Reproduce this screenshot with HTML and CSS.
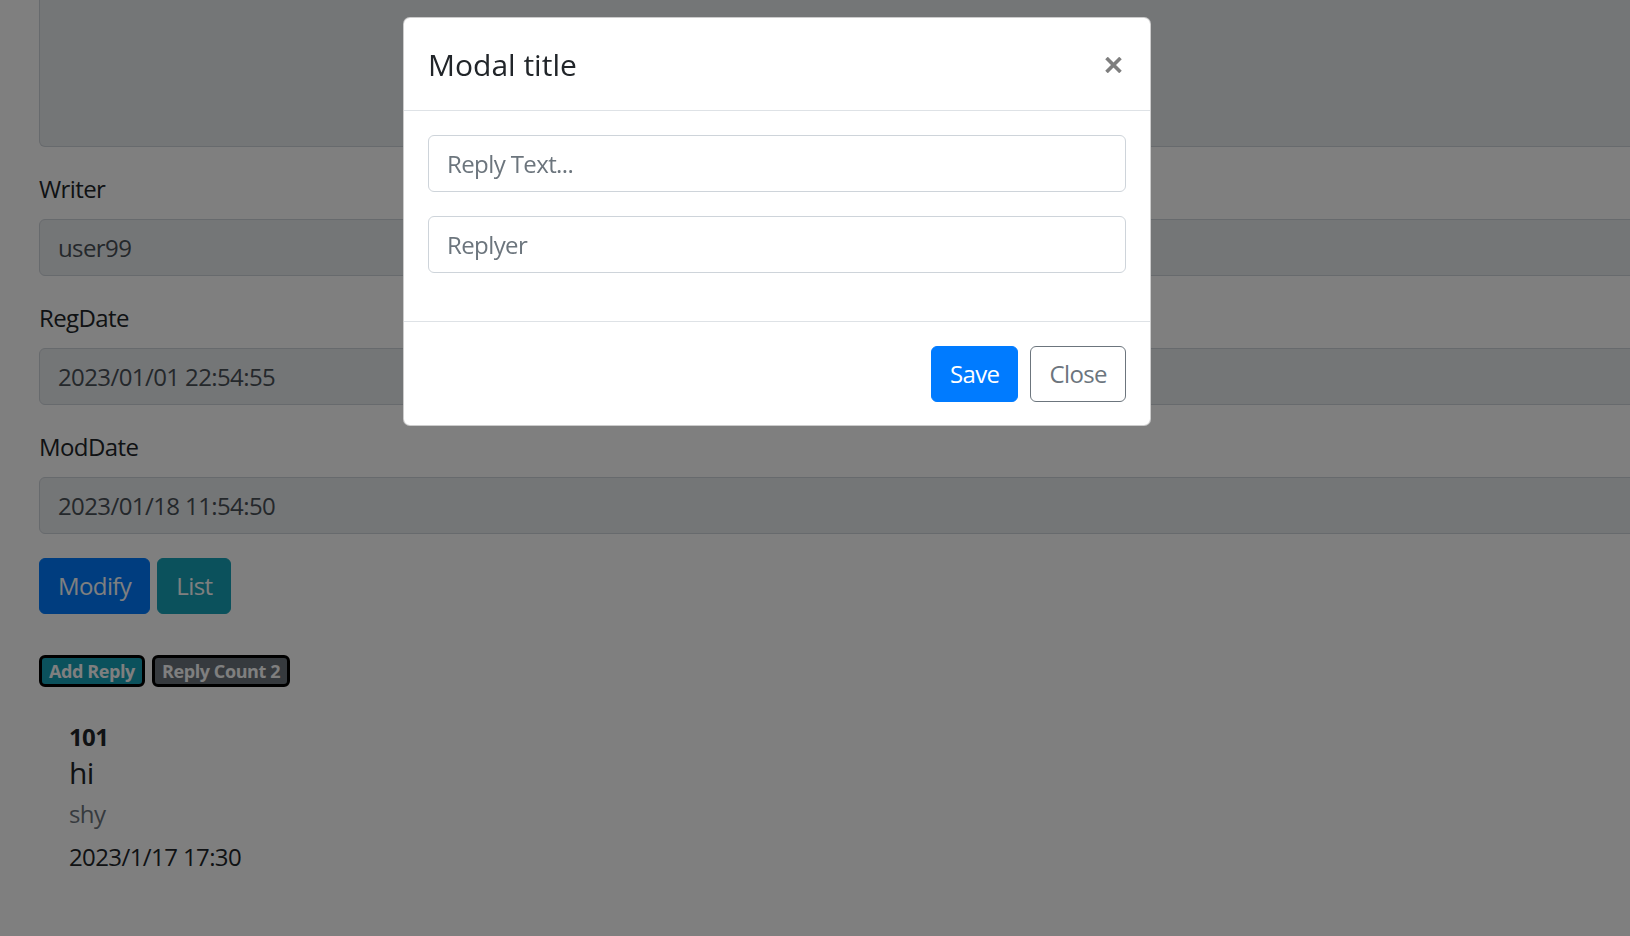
FILE: index.html
```html
<!DOCTYPE html>
<html lang="en">
<head>
<meta charset="utf-8">
<title>Board Read</title>
<link rel="stylesheet" href="styles.css">
</head>
<body>
<main class="page">
  <div class="form-group">
    <div class="textarea-tail"></div>
  </div>
  <div class="form-group">
    <label class="field-label">Writer</label>
    <input class="form-control" type="text" value="user99" readonly>
  </div>
  <div class="form-group">
    <label class="field-label">RegDate</label>
    <input class="form-control" type="text" value="2023/01/01 22:54:55" readonly>
  </div>
  <div class="form-group">
    <label class="field-label">ModDate</label>
    <input class="form-control" type="text" value="2023/01/18 11:54:50" readonly>
  </div>
  <div class="actions">
    <button class="btn btn-primary" type="button">Modify</button>
    <button class="btn btn-info" type="button">List</button>
  </div>
  <div class="badges">
    <button class="badge badge-info" type="button">Add Reply</button>
    <button class="badge badge-secondary" type="button">Reply Count 2</button>
  </div>
  <ul class="reply-list">
    <li class="reply">
      <div class="reply-no">101</div>
      <h5 class="reply-text">hi</h5>
      <div class="reply-writer">shy</div>
      <div class="reply-date">2023/1/17 17:30</div>
    </li>
  </ul>
</main>

<div class="modal-backdrop"></div>

<div class="modal" role="dialog">
  <div class="modal-content">
    <div class="modal-header">
      <h5 class="modal-title">Modal title</h5>
      <button class="close" type="button" aria-label="Close">
        <svg width="17" height="16" viewBox="0 0 17 16" aria-hidden="true">
          <path d="M1.5 1 L15.5 15 M15.5 1 L1.5 15" stroke="#000" stroke-width="3.6" fill="none"/>
        </svg>
      </button>
    </div>
    <div class="modal-body">
      <div class="form-group">
        <input class="form-control" type="text" placeholder="Reply Text...">
      </div>
      <div class="form-group">
        <input class="form-control" type="text" placeholder="Replyer">
      </div>
    </div>
    <div class="modal-footer">
      <button class="btn btn-primary" type="button">Save</button>
      <button class="btn btn-outline-secondary" type="button">Close</button>
    </div>
  </div>
</div>
</body>
</html>
```

FILE: styles.css
```css
html, body {
  margin: 0;
  padding: 0;
  overflow: hidden;
  height: 100%;
}

body {
  font-family: "Open Sans", "Noto Sans", sans-serif;
  font-size: 24px;
  line-height: 1.5;
  letter-spacing: -0.6px;
  color: #212529;
  background: #fff;
}

.page {
  padding-left: 39px;
  margin-right: -120px;
}

.form-group {
  margin-bottom: 24px;
}

.textarea-tail {
  height: 147px;
  box-sizing: border-box;
  background: #e9ecef;
  border: 1px solid #ced4da;
  border-top: none;
  border-radius: 0 0 6px 6px;
}

.field-label {
  display: block;
  margin-bottom: 12px;
  line-height: 36px;
}

.form-control {
  display: block;
  width: 100%;
  height: 57px;
  box-sizing: border-box;
  padding: 9px 18px;
  font: inherit;
  font-size: 24px;
  line-height: 36px;
  letter-spacing: -0.6px;
  color: #495057;
  background: #fff;
  border: 1px solid #ced4da;
  border-radius: 6px;
  outline: none;
}

.form-control[readonly] {
  background: #e9ecef;
}

.form-control::placeholder {
  color: #6c757d;
  opacity: 1;
}

.actions {
  display: flex;
  gap: 7px;
}

.btn {
  height: 56px;
  box-sizing: border-box;
  padding: 0 18px;
  font: inherit;
  font-size: 24px;
  line-height: 36px;
  letter-spacing: -0.6px;
  border: 1px solid transparent;
  border-radius: 6px;
  cursor: pointer;
}

.btn-primary {
  color: #fff;
  background: #007bff;
  border-color: #007bff;
}

.btn-info {
  color: #fff;
  background: #17a2b8;
  border-color: #17a2b8;
}

.btn-outline-secondary {
  color: #6c757d;
  background: #fff;
  border-color: #6c757d;
}

.badges {
  display: flex;
  gap: 7px;
  margin-top: 41px;
}

.badge {
  height: 32px;
  box-sizing: border-box;
  padding: 0 7px;
  font-family: inherit;
  font-size: 18px;
  font-weight: 700;
  line-height: 26px;
  letter-spacing: -0.4px;
  color: #fff;
  border: 3px solid #000;
  border-radius: 6px;
}

.badge-info {
  background: #17a2b8;
}

.badge-secondary {
  background: #6c757d;
}

.reply-list {
  list-style: none;
  margin: 32px 0 0;
  padding: 0 0 0 30px;
}

.reply-no {
  font-weight: 700;
  line-height: 36px;
}

.reply-text {
  margin: 0;
  font-size: 30px;
  font-weight: 500;
  line-height: 36px;
}

.reply-writer {
  margin-top: 5px;
  line-height: 36px;
  color: #6c757d;
}

.reply-date {
  margin-top: 7px;
  line-height: 36px;
}

.modal-backdrop {
  position: fixed;
  inset: 0;
  background: #000;
  opacity: 0.5;
  z-index: 10;
}

.modal {
  position: fixed;
  top: 17px;
  left: 403px;
  width: 748px;
  z-index: 20;
}

.modal-content {
  background: #fff;
  border: 1px solid rgba(0, 0, 0, 0.2);
  border-radius: 7px;
}

.modal-header {
  display: flex;
  align-items: center;
  padding: 24px 24px 23px;
  border-bottom: 1px solid #dee2e6;
}

.modal-title {
  margin: 0;
  font-size: 30px;
  font-weight: 500;
  line-height: 45px;
  letter-spacing: 0;
}

.close {
  margin-left: auto;
  margin-right: 4px;
  padding: 0;
  border: 0;
  background: transparent;
  opacity: 0.5;
  display: flex;
  cursor: pointer;
}

.modal-body {
  padding: 24px;
}

.modal-footer {
  display: flex;
  justify-content: flex-end;
  gap: 12px;
  padding: 24px 24px 23px;
  border-top: 1px solid #dee2e6;
}
```
